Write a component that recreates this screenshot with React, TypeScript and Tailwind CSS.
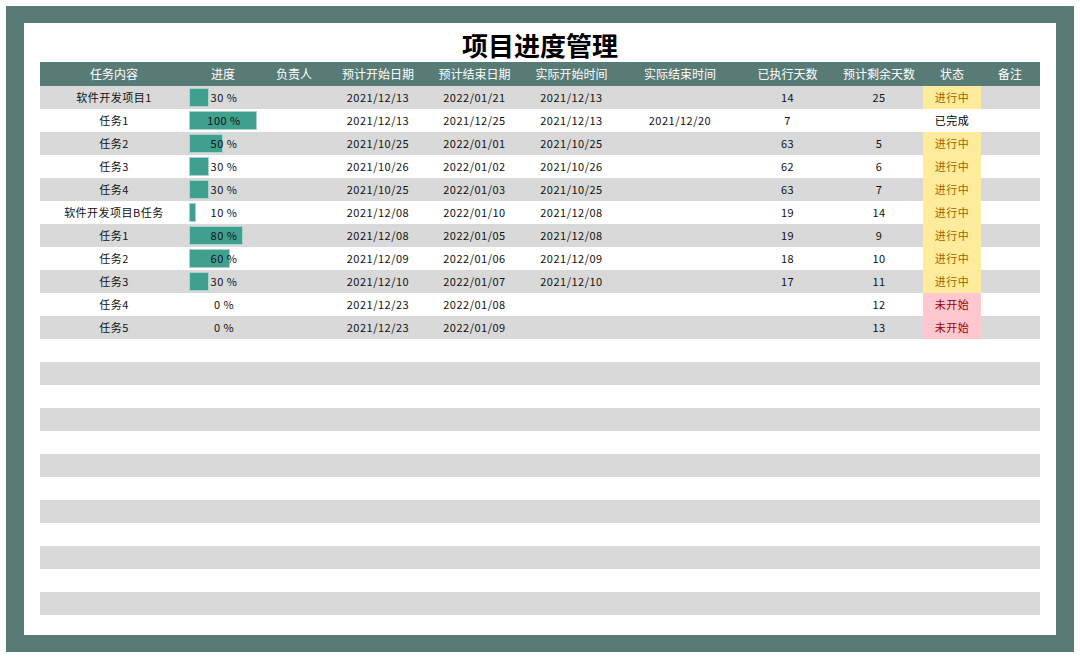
import React from "react";

const cols = [148, 70, 72, 96, 97, 97, 120, 95, 88, 58, 58];
const heads = ["任务内容","进度","负责人","预计开始日期","预计结束日期","实际开始时间","实际结束时间","已执行天数","预计剩余天数","状态","备注"];
type R = [string, number, string, string, string, string, string, string, string];
const rows: R[] = [
  ["软件开发项目1",30,"2021/12/13","2022/01/21","2021/12/13","","14","25","进行中"],
  ["任务1",100,"2021/12/13","2021/12/25","2021/12/13","2021/12/20","7","","已完成"],
  ["任务2",50,"2021/10/25","2022/01/01","2021/10/25","","63","5","进行中"],
  ["任务3",30,"2021/10/26","2022/01/02","2021/10/26","","62","6","进行中"],
  ["任务4",30,"2021/10/25","2022/01/03","2021/10/25","","63","7","进行中"],
  ["软件开发项目B任务",10,"2021/12/08","2022/01/10","2021/12/08","","19","14","进行中"],
  ["任务1",80,"2021/12/08","2022/01/05","2021/12/08","","19","9","进行中"],
  ["任务2",60,"2021/12/09","2022/01/06","2021/12/09","","18","10","进行中"],
  ["任务3",30,"2021/12/10","2022/01/07","2021/12/10","","17","11","进行中"],
  ["任务4",0,"2021/12/23","2022/01/08","","","","12","未开始"],
  ["任务5",0,"2021/12/23","2022/01/09","","","","13","未开始"],
];
const grid = { gridTemplateColumns: cols.map(c => c + "px").join(" ") };

export default function App() {
  const all = Array.from({ length: 23 }, (_, i) => rows[i] ?? null);
  return (
    <div className="w-[1080px] h-[658px] bg-white p-[6px]" style={{ fontFamily: '"Noto Sans CJK SC", "Noto Sans", sans-serif' }}>
      <div className="w-full h-full bg-[#587b76] pt-[17px] pl-[18px] pr-[18px] pb-[17px]">
        <div className="w-full h-full bg-white pt-[4px] px-[16px]">
          <div className="h-[35px] text-center text-[26px] font-bold leading-[35px] text-black">项目进度管理</div>
          <div className="grid h-[24px] bg-[#587b76] text-white text-[12px] items-center text-center" style={grid}>
            {heads.map(h => <div key={h}>{h}</div>)}
          </div>
          {all.map((r, i) => (
            <div key={i} className={`grid h-[23px] text-[11px] tracking-[0.5px] text-[#111] items-center text-center ${i % 2 === 0 ? "bg-[#d9d9d9]" : "bg-white"}`} style={grid}>
              {r && <>
                <div>{r[0]}</div>
                <div className="relative h-full">
                  {r[1] > 0 && <div className="absolute left-[1px] top-[2px] bottom-[2px] bg-[#3fa090] border border-[#a8d4cc]" style={{ width: `${r[1] * 0.68}px` }} />}
                  <div className="relative leading-[23px] pl-[2px]">{r[1]} %</div>
                </div>
                <div></div>
                <div>{r[2]}</div><div>{r[3]}</div><div>{r[4]}</div><div>{r[5]}</div>
                <div>{r[6]}</div><div>{r[7]}</div>
                <div className={`h-full leading-[23px] ${r[8] === "进行中" ? "bg-[#ffeb9c] text-[#9c6500]" : r[8] === "未开始" ? "bg-[#ffc7ce] text-[#9c0006]" : "text-black"}`}>{r[8]}</div>
                <div></div>
              </>}
            </div>
          ))}
        </div>
      </div>
    </div>
  );
}
